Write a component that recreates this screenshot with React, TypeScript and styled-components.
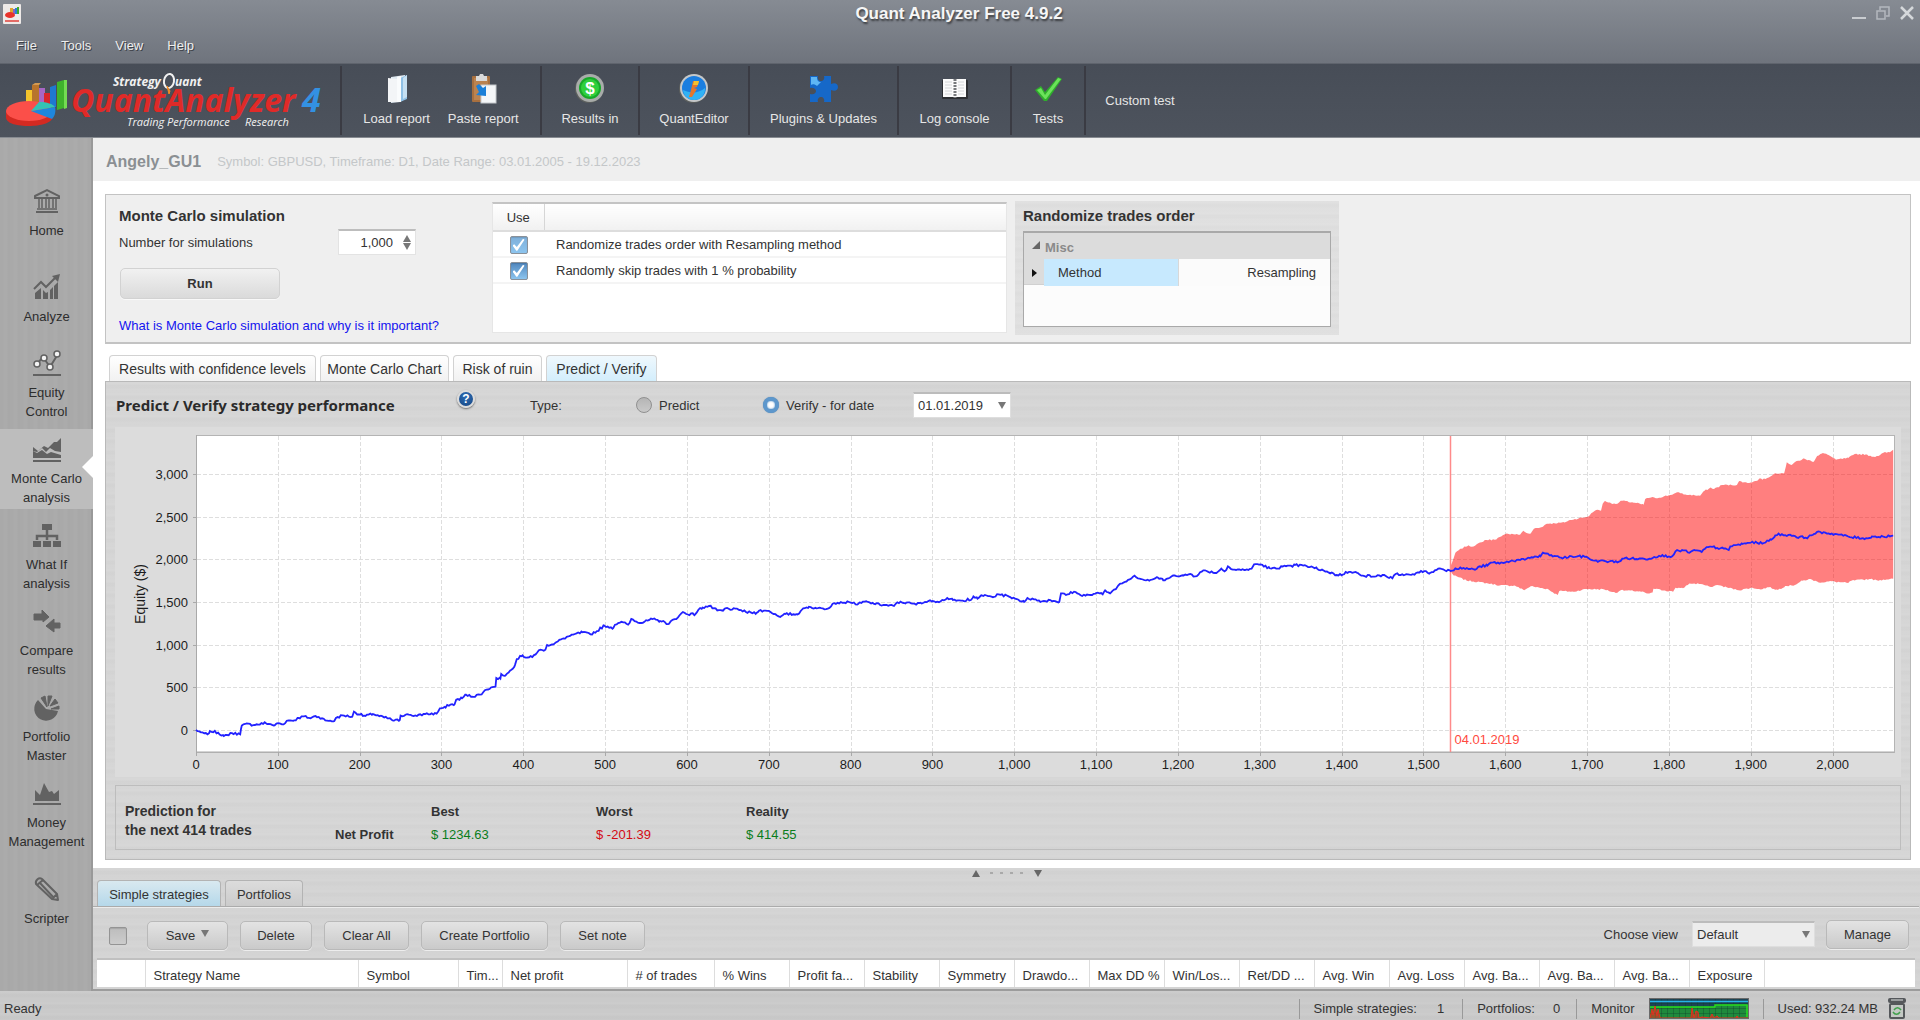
import React, { useLayoutEffect, useRef, useState } from 'react';
import styled, { createGlobalStyle, css } from 'styled-components';

const GlobalStyle = createGlobalStyle`
  *, *::before, *::after { box-sizing: border-box; }
  html, body { margin: 0; padding: 0; }
  body {
    background: #cccccc;
    color: #333333;
    font: 13px/19px "Liberation Sans", Arial, sans-serif;
  }
  button, input, select { font: inherit; color: inherit; margin: 0; }
  h1, h2, h3, p { margin: 0; font-size: 13px; font-weight: bold; }
`;

const brushedH = css`
  background-image: repeating-linear-gradient(
    180deg,
    rgba(255, 255, 255, 0.05) 0 2px,
    rgba(0, 0, 0, 0.006) 3px 6px,
    rgba(255, 255, 255, 0.02) 7px 11px
  );
`;

const Shell = styled.div`
  min-height: 100vh;
  display: flex;
  flex-direction: column;
`;

/* ---------- window frame ---------- */

const Frame = styled.header`
  background: linear-gradient(#868b93, #6f747d);
  border-bottom: 1px solid #5f646d;
  color: #f4f4f4;
`;

const TitleBar = styled.div`
  display: grid;
  grid-template-columns: 1fr auto 1fr;
  align-items: center;
  height: 28px;
  padding: 0 4px 0 2px;
`;

const WindowTitle = styled.h1`
  font-size: 17px;
  line-height: 28px;
  color: #f6f6f6;
  text-shadow: 1px 2px 2px rgba(0, 0, 0, 0.55);
`;

const WindowButtons = styled.div`
  display: flex;
  justify-content: flex-end;
  gap: 6px;
`;

const WindowButton = styled.button`
  width: 18px;
  height: 20px;
  padding: 0;
  border: 0;
  background: none;
  display: grid;
  place-items: center;
`;

const MenuBar = styled.nav`
  display: flex;
  height: 35px;
  padding: 0 4px;
`;

const MenuButton = styled.button`
  border: 0;
  background: none;
  padding: 0 12px;
  color: #eeeeee;
  text-shadow: 1px 1px 0 #3d4148;
`;

/* ---------- toolbar ---------- */

const Toolbar = styled.div`
  display: flex;
  height: 74px;
  padding: 2px 0;
  background: linear-gradient(#474d57, #4d535d);
  border-bottom: 1px solid #878b91;
`;

const LogoCell = styled.div`
  width: 340px;
  flex: none;
`;

const ToolGroup = styled.div<{ $w: number }>`
  display: flex;
  flex: none;
  align-items: stretch;
  justify-content: center;
  gap: 2px;
  width: ${(p) => p.$w}px;
  border-left: 2px solid #3a3b43;
`;

const ToolButton = styled.button`
  display: flex;
  flex-direction: column;
  align-items: center;
  justify-content: center;
  gap: 4px;
  padding: 0 8px;
  border: 0;
  background: none;
  color: #e6e6e6;
  white-space: nowrap;
`;

/* ---------- body ---------- */

const Body = styled.div`
  flex: 1;
  display: flex;
`;

const Sidebar = styled.nav`
  flex: none;
  width: 93px;
  display: flex;
  flex-direction: column;
  gap: 6px;
  padding-top: 33px;
  background: repeating-linear-gradient(90deg, #a9a9a9 0 3px, #ababab 4px 7px, #a8a8a8 8px 10px);
  border-right: 2px solid #999999;
`;

const SideButton = styled.button<{ $active?: boolean }>`
  position: relative;
  flex: none;
  width: 93px;
  height: 80px;
  padding: 7px 2px 0 2px;
  border: 0;
  background: ${(p) => (p.$active ? '#bdbdbd' : 'none')};
  display: flex;
  flex-direction: column;
  align-items: center;
  justify-content: center;
  gap: 7px;
  color: #2d2d2d;
  line-height: 19px;
  svg { flex: none; }
`;

const ActiveNotch = styled.span`
  position: absolute;
  right: 0;
  top: 50%;
  margin-top: -13px;
  border: 11px solid transparent;
  border-left-width: 0;
  border-right-color: #ffffff;
`;

const Main = styled.main`
  flex: 1;
  min-width: 0;
  background: #ffffff;
  display: flex;
  flex-direction: column;
`;

const ReportHeader = styled.div`
  display: flex;
  align-items: center;
  gap: 16px;
  height: 43px;
  padding: 3px 13px 0;
  background: #efefef;
`;

const ReportName = styled.h2`
  font-size: 16px;
  color: #8b8f93;
`;

const ReportInfo = styled.span`
  color: #c4c7c9;
`;

/* ---------- simulation settings ---------- */

const Settings = styled.section`
  display: flex;
  gap: 8px;
  height: 150px;
  margin: 13px 9px 0 12px;
  padding: 6px 12px;
  background: #efefef;
  border: 1px solid #c3c3c3;
  border-bottom-width: 2px;
`;

const SimForm = styled.form`
  width: 366px;
  display: flex;
  flex-direction: column;
  align-items: flex-start;
  padding: 5px 0 0 1px;
`;

const PanelTitle = styled.h3`
  font-size: 15px;
  line-height: 20px;
`;

const FieldRow = styled.div`
  display: flex;
  align-items: center;
  width: 297px;
  margin-top: 3px;
  justify-content: space-between;
`;

const SpinBox = styled.div`
  display: flex;
  align-items: center;
  width: 78px;
  height: 26px;
  padding-right: 4px;
  background: #ffffff;
  border: 1px solid #e3e3e3;
  border-top: 2px solid #bdbdbd;
`;

const SpinInput = styled.input`
  width: 54px;
  flex: 1;
  min-width: 0;
  border: 0;
  padding: 0 10px 0 0;
  background: none;
  text-align: right;
`;

const Arrow = styled.span<{ $up?: boolean; $size?: number; $color?: string }>`
  display: inline-block;
  width: 0;
  height: 0;
  border: ${(p) => p.$size ?? 4}px solid transparent;
  ${(p) =>
    p.$up
      ? css`border-top-width: 0; border-bottom: 7px solid ${p.$color ?? '#777777'};`
      : css`border-bottom-width: 0; border-top: 7px solid ${p.$color ?? '#777777'};`}
`;

const SpinArrows = styled.span`
  display: flex;
  flex-direction: column;
  gap: 1px;
`;

const Button = styled.button<{ $w?: number; $light?: boolean }>`
  height: ${(p) => (p.$light ? 31 : 29)}px;
  ${(p) => p.$w && `width: ${p.$w}px;`}
  padding: 0;
  border: 1px solid ${(p) => (p.$light ? '#d2d2d2' : '#b9b9b9')};
  border-radius: 5px;
  background: ${(p) => (p.$light ? 'linear-gradient(#f1f1f1, #dadada)' : 'linear-gradient(#e3e3e3, #cacaca)')};
  box-shadow: 0 1px 0 rgba(255, 255, 255, 0.6);
  font-weight: ${(p) => (p.$light ? 'bold' : 'normal')};
  white-space: nowrap;
`;

const SaveArrow = styled.span`
  display: inline-block;
  margin-left: 6px;
  vertical-align: 3px;
  line-height: 0;
`;

const RunButton = styled(Button)`
  margin: 13px 0 17px 1px;
`;

const HelpLink = styled.a`
  color: #1414f0;
  text-decoration: none;
  white-space: nowrap;
`;

const MethodsBox = styled.div`
  width: 515px;
  height: 131px;
  margin-top: 1px;
  background: #ffffff;
  border: 1px solid #e6e6e6;
  border-top: 2px solid #c4c4c4;
`;

const MethodsTable = styled.table`
  width: 100%;
  border-collapse: collapse;
  table-layout: fixed;
  th {
    height: 27px;
    padding: 0;
    font-weight: normal;
    background: linear-gradient(#ffffff, #f1f1f1);
    border-bottom: 2px solid #dddddd;
  }
  th:first-child { border-right: 1px solid #d6d6d6; }
  td { height: 26px; padding: 0 0 0 12px; border-bottom: 2px solid #f4f4f4; }
  td:first-child { padding: 0; text-align: center; }
`;

const CheckBox = styled.input.attrs({ type: 'checkbox' })<{ $tone?: string }>`
  appearance: none;
  flex: none;
  display: inline-block;
  vertical-align: middle;
  width: 18px;
  height: 18px;
  border: 1px solid #949494;
  border-radius: 2px;
  background: linear-gradient(#bdbdbd, #cccccc);
  box-shadow: inset 0 1px 1px rgba(0, 0, 0, 0.12);
  &:checked {
    border-color: #8a9199;
    background: linear-gradient(${(p) => p.$tone ?? '#4f86bd'}, #8cc4ee);
  }
  &:checked::after {
    content: '';
    display: block;
    width: 12px;
    height: 12px;
    margin: 2px;
    background: #ffffff;
    clip-path: polygon(0 55%, 14% 45%, 36% 68%, 88% 0, 100% 8%, 40% 100%, 32% 100%);
  }
`;

const MethodPanel = styled.div`
  width: 324px;
  height: 134px;
  padding: 5px 8px;
  background-color: #dfdfdf;
  ${brushedH}
`;

const PropertyBox = styled.div`
  height: 96px;
  margin-top: 5px;
  background: #fcfcfc;
  border: 1px solid #a9a9a9;
  border-top-width: 2px;
`;

const PropertyGroup = styled.div`
  display: flex;
  align-items: center;
  gap: 5px;
  height: 26px;
  padding: 2px 8px 0;
  background: #dcdcdc;
  color: #8a8a8a;
  font-weight: bold;
  svg { margin-bottom: 4px; }
`;

const PropertyRow = styled.div`
  display: grid;
  grid-template-columns: 20px 134px 1fr;
  height: 26px;
  line-height: 27px;
  background: #dcdcdc;
  border-bottom: 1px solid #d0d0d0;
`;

const PropertyName = styled.span`
  padding-left: 14px;
  background: #c7e9fe;
`;

const PropertyValue = styled.span`
  padding-right: 14px;
  text-align: right;
  background: #fbfbfb;
  border-left: 1px solid #d8d8d8;
`;

const RowMarker = styled.span`
  place-self: center;
  border: 4px solid transparent;
  border-left: 5px solid #111111;
  border-right-width: 0;
`;

/* ---------- result tabs ---------- */

const TabRow = styled.div<{ $left: number }>`
  display: flex;
  gap: 4px;
  padding-left: ${(p) => p.$left}px;
`;

const Tab = styled.button<{ $active?: boolean; $dark?: boolean; $w: number }>`
  width: ${(p) => p.$w}px;
  height: 26px;
  padding: 2px 0 0;
  font-size: ${(p) => (p.$dark ? 13 : 14)}px;
  white-space: nowrap;
  border: 1px solid ${(p) => (p.$dark ? '#b3b3b3' : '#d2d2d2')};
  border-bottom: 0;
  border-radius: 4px 4px 0 0;
  background: ${(p) =>
    p.$dark
      ? p.$active ? 'linear-gradient(#d9e9f0, #b5d8ea)' : 'linear-gradient(#dcdcdc, #cbcbcb)'
      : p.$active ? 'linear-gradient(#eff8fd, #d3eefc)' : 'linear-gradient(#ffffff, #f1f1f1)'};
`;

const ResultTabs = styled(TabRow)`
  margin-top: 11px;
`;

const ResultPanel = styled.section`
  margin: 0 9px 8px 12px;
  padding: 0 9px 9px;
  background-color: #d5d5d5;
  ${brushedH}
  border: 1px solid #b9b9b9;
`;

const VerifyBar = styled.div`
  display: grid;
  grid-template-columns: 341px 73px 106px 127px 150px auto;
  align-items: center;
  height: 45px;
  padding: 1px 0 0 1px;
`;

const VerifyTitle = styled.h3`
  font: bold 15px/20px "Noto Sans", "Open Sans", sans-serif;
  color: #2b2b2b;
  white-space: nowrap;
`;

const HelpButton = styled.button`
  width: 18px;
  height: 18px;
  margin-bottom: 12px;
  padding: 0;
  border: 2px solid #dcdcdc;
  border-radius: 50%;
  background: radial-gradient(circle at 50% 30%, #2f6db4, #164683);
  box-shadow: 0 1px 2px rgba(0, 0, 0, 0.5);
  color: #ffffff;
  font-weight: bold;
  font-size: 12px;
  line-height: 14px;
`;

const RadioLabel = styled.label`
  display: flex;
  align-items: center;
  gap: 7px;
  white-space: nowrap;
`;

const Radio = styled.input.attrs({ type: 'radio' })`
  appearance: none;
  width: 16px;
  height: 16px;
  border: 1px solid #909090;
  border-radius: 50%;
  background: linear-gradient(#b5b5b5, #c9c9c9);
  &:checked {
    border: 4px solid #5d97cc;
    background: #ffffff;
    box-shadow: inset 0 0 2px #5d97cc, 0 0 1px #4d7ba6;
  }
`;

const SelectBox = styled.div<{ $w: number; $bg: string }>`
  display: grid;
  align-items: center;
  width: ${(p) => p.$w}px;
  height: 26px;
  background: ${(p) => p.$bg};
  border: 1px solid #dedede;
  border-top: 2px solid #bcbcbc;
  select, span { grid-area: 1 / 1; }
  select {
    width: 100%;
    height: 100%;
    appearance: none;
    border: 0;
    background: none;
    padding: 0 4px;
  }
  span { justify-self: end; margin-right: 4px; pointer-events: none; }
`;

const ChartArea = styled.div`
  height: 350px;
  background: #dcdcdc;
  svg { display: block; font: 13px "Liberation Sans", Arial, sans-serif; }
`;

const Prediction = styled.div`
  display: grid;
  grid-template-columns: 210px 96px 165px 150px 1fr;
  height: 65px;
  margin-top: 8px;
  padding: 16px 9px 0;
  border: 1px solid #bdbdbd;
`;

const PredictionCell = styled.div<{ $color?: string }>`
  display: flex;
  flex-direction: column;
  gap: 4px;
  strong { min-height: 19px; }
  span { color: ${(p) => p.$color ?? 'inherit'}; }
`;

const PredictionTitle = styled.p`
  font-size: 14px;
  line-height: 19px;
`;

/* ---------- databank ---------- */

const Databank = styled.section`
  display: flex;
  flex-direction: column;
  flex: 1;
  background-color: #d3d3d3;
  ${brushedH}
  border-bottom: 2px solid #9c9c9c;
`;

const Splitter = styled.div`
  display: flex;
  justify-content: center;
  align-items: center;
  gap: 10px;
  height: 12px;
  padding-bottom: 2px;
`;

const SplitterGrip = styled.span`
  width: 34px;
  height: 2px;
  background: repeating-linear-gradient(90deg, #a9a9a9 0 3px, transparent 3px 10px);
`;

const DatabankBody = styled.div`
  flex: 1;
  margin-right: 1px;
  padding: 0 4px 2px;
  border-top: 1px solid #ababab;
  box-shadow: inset 0 1px 0 #ececec;
`;

const ActionRow = styled.div`
  display: flex;
  align-items: center;
  gap: 12px;
  height: 51px;
  padding: 6px 6px 0 12px;
  input { margin-right: 8px; }
`;

const ViewPicker = styled.div`
  display: flex;
  align-items: center;
  gap: 14px;
  margin: 0 0 3px auto;
`;

const ViewSelect = styled(SelectBox)`
  margin-right: -3px;
`;

const ColumnTable = styled.table`
  width: 100%;
  border-collapse: collapse;
  table-layout: fixed;
  background: #ffffff;
  border-top: 2px solid #c0c0c0;
  th {
    height: 28px;
    padding: 3px 0 0 8px;
    overflow: hidden;
    white-space: nowrap;
    text-align: left;
    font-weight: normal;
    border-right: 1px solid #dddddd;
  }
  th:last-child { border-right: 0; }
`;

const StatusBar = styled.footer`
  display: flex;
  align-items: center;
  height: 30px;
  padding: 5px 14px 0 4px;
  background-color: #c9c9c9;
  ${brushedH}
`;

const StatusItem = styled.div<{ $gap?: number; $right?: number }>`
  display: flex;
  align-items: center;
  gap: ${(p) => p.$gap ?? 14}px;
  height: 20px;
  padding: 0 ${(p) => p.$right ?? 14}px 0 14px;
  border-left: 1px solid #999999;
  white-space: nowrap;
`;

const Ready = styled.span`
  margin-right: auto;
`;

/* ---------- drawings ---------- */

const BarsAndPie = () => (
  <g>
    <rect x="26" y="24" width="7" height="18" fill="#f3c42c" />
    <path d="M32 19h7v23h-7z" fill="#b8742c" />
    <path d="M32 19l3-2h6l-2 2z" fill="#d39a52" />
    <path d="M39 22h6v20h-6z" fill="#a866c4" />
    <path d="M44 27h6v14h-6z" fill="#d8262c" />
    <path d="M50 21l6-2v22h-6z" fill="#1f78d0" />
    <path d="M57 16l7-2v28l-7 2z" fill="#3fb32c" />
    <path d="M64 14h3v28l-3 1z" fill="#74dc52" />
    <path d="M6 45v6c0 7 12 9 23 9s24-3 24-10v-6z" fill="#d32a22" />
    <ellipse cx="29" cy="45" rx="23" ry="10" fill="#fb4f49" />
    <path d="M31 45l24-4c1 4 0 9-3 12z" fill="#1f86dd" />
    <path d="M31 45l8-9c8 0 14 2 16 5z" fill="#35c2b4" />
  </g>
);

const Logo = () => (
  <svg width="340" height="70" fontFamily="'Open Sans', 'Noto Sans', sans-serif" fontStyle="italic">
    <BarsAndPie />
    <text x="113" y="20" fontSize="12" fontWeight="bold" fill="#f1f1f1">Strategy</text>
    <ellipse cx="169" cy="15" rx="5" ry="7" fill="none" stroke="#f1f1f1" strokeWidth="2" transform="rotate(10 169 15)" />
    <path d="M167 20l3 5-1 3z" fill="#f08a24" stroke="#f08a24" />
    <text x="175" y="20" fontSize="12" fontWeight="bold" fill="#f1f1f1">uant</text>
    <text x="71" y="46" fontSize="32" fontWeight="bold" fill="#e02a28">QuantAnalyzer</text>
    <text x="302" y="46" fontSize="34" fontWeight="bold" fill="#3391e2">4</text>
    <text x="127" y="60" fontSize="11" fill="#f1f1f1">Trading Performance</text>
    <text x="245" y="60" fontSize="11" fill="#f1f1f1">Research</text>
  </svg>
);

const AppIcon = () => (
  <svg width="20" height="22" viewBox="0 0 20 22">
    <rect x="1" y="1" width="18" height="20" rx="1" fill="#eeeae8" />
    <path d="M8 5h3v6H8z" fill="#e2a52c" />
    <path d="M11 6h2v5h-2z" fill="#8b62c0" />
    <path d="M13 5h2v6h-2z" fill="#2a80d2" />
    <path d="M15 4h2v7h-2z" fill="#3ea92d" />
    <ellipse cx="8" cy="12" rx="5" ry="3" fill="#e8332b" />
    <path d="M3 17h14v2H3z" fill="#e36b66" />
  </svg>
);

const LoadIcon = () => (
  <svg width="32" height="32" viewBox="0 0 32 32">
    <path d="M10 4l14-2v24l-5 3-9 1z" fill="#dfe9f1" />
    <path d="M17 6l9-4v24l-7 3z" fill="#8fc1e6" />
    <path d="M22 5l4-3v22l-4 2z" fill="#c6e0f2" />
    <path d="M7 5l9 1 3 23-12 0z" fill="#f3f5f7" />
    <path d="M16 4l4-1v26l-4 0z" fill="#fafcfd" />
  </svg>
);

const PasteIcon = () => (
  <svg width="32" height="32" viewBox="0 0 32 32">
    <rect x="5" y="3" width="18" height="26" rx="1" fill="#a8703f" />
    <rect x="7" y="5" width="14" height="22" fill="#bb8350" />
    <path d="M9 3h3l1-2h3l1 2h3v5H9z" fill="#dadada" />
    <rect x="14" y="12" width="15" height="18" fill="#f4f6f8" stroke="#c4c8cc" />
    <path d="M9 13l3-2 4 4 3-2v10l-10-1 3-3z" fill="#1b7fd8" />
  </svg>
);

const DollarIcon = () => (
  <svg width="32" height="32" viewBox="0 0 32 32">
    <circle cx="15" cy="16" r="14" fill="#5d605e" />
    <circle cx="16" cy="15" r="14" fill="#a9acaa" />
    <circle cx="16" cy="15" r="11" fill="#17a82a" />
    <circle cx="16" cy="15" r="9" fill="#2fcf3d" />
    <text x="16" y="21" textAnchor="middle" fontSize="17" fontWeight="bold" fill="#ffffff" fontFamily="Liberation Sans">$</text>
  </svg>
);

const EditorIcon = () => (
  <svg width="32" height="32" viewBox="0 0 32 32">
    <circle cx="15" cy="16" r="14" fill="#5d605e" />
    <circle cx="16" cy="15" r="14" fill="#c5c8ca" />
    <circle cx="16" cy="15" r="12" fill="#1b7ee0" />
    <path d="M5 17a11 11 0 0 0 22-2c-6 5-14 6-22 2z" fill="#31b2f4" />
    <path d="M15 8h6l-2 6-3 1 3 1-5 8-3 0 2-7z" fill="#e5762a" />
    <path d="M16 8h5l-1 4h-5z" fill="#f4c12e" />
  </svg>
);

const PuzzleIcon = () => (
  <svg width="32" height="32" viewBox="0 0 32 32">
    <path
      d="M3 3h8c-1 3 1 5 3 5s4-2 3-5h7v8c4-2 7 0 7 3s-3 5-7 3v12h-7c1-3-1-5-3-5s-4 2-3 5H3v-8c4 1 6-1 6-3s-3-4-6-3z"
      fill="#1668c8"
    />
    <path d="M4 4h6c0 3 1 5 4 5l-4 4c-2-2-5-2-6-1z" fill="#5fb6f4" />
  </svg>
);

const BookIcon = () => (
  <svg width="32" height="32" viewBox="0 0 32 32">
    <rect x="3" y="7" width="26" height="19" rx="1" fill="#2d2f33" />
    <path d="M4 6h11l1 1 1-1h10v18H17l-1 1-1-1H4z" fill="#fbfbfb" />
    <path d="M16 6v19" stroke="#77797c" strokeWidth="3" strokeDasharray="2 1" />
    <path d="M6 9h7M6 12h7M6 15h7M6 18h7M6 21h7M19 9h6M19 12h6M19 15h6M19 18h6M19 21h6" stroke="#d4d6d8" />
  </svg>
);

const TickIcon = () => (
  <svg width="32" height="32" viewBox="0 0 32 32">
    <path d="M3 17l6-4 4 6L26 4l4 2-15 22h-3z" fill="#2fae2c" />
    <path d="M5 17l4-2 4 7L26 5l3 1-15 20h-1z" fill="#6be25a" />
  </svg>
);

const sideIcons: Record<string, React.ReactNode> = {
  home: (
    <>
      <path d="M2 6L14 0l12 6v2H2z" fill="none" stroke="#626262" strokeWidth="2" />
      <circle cx="14" cy="5" r="1.5" fill="#626262" />
      <path d="M6 9v9M9 9v9M13 9v9M16 9v9M20 9v9M23 9v9M4 19h20" stroke="#626262" strokeWidth="1.5" />
      <path d="M3 22h22" stroke="#626262" strokeWidth="2" />
    </>
  ),
  analyze: (
    <>
      <path d="M2 23v-6l6-5v11zM10 23v-9l3 3 2-1v7zM17 23v-9l3-3v12zM21 23V10l4-4v17z" fill="#626262" />
      <path d="M1 13l7-7 5 5 9-9" fill="none" stroke="#626262" strokeWidth="2" />
      <path d="M19 0l8-2-2 8z" fill="#626262" />
    </>
  ),
  equity: (
    <>
      <path d="M3 13l7-8 7 10 8-13" fill="none" stroke="#626262" strokeWidth="2" />
      {[[4, 12], [11, 6], [17, 15], [24, 2]].map(([x, y]) => (
        <circle key={x} cx={x} cy={y} r="3" fill="#f4f4f4" stroke="#626262" strokeWidth="1.5" />
      ))}
      <path d="M0 23h28" stroke="#626262" strokeWidth="2" />
    </>
  ),
  monte: (
    <>
      <path d="M0 9l5 4 6-5 4 2 6-6 3 0 4-4v14l-6-1-5-3-4 4-4-4-5 4-4-1z" fill="#626262" />
      <path d="M0 13l4 2 5-3 5 4 4-2 10 3v3H0z" fill="#626262" />
      <path d="M0 23h28" stroke="#626262" strokeWidth="2" />
    </>
  ),
  whatif: (
    <>
      <path d="M9 0h10v6H9zM0 17h8v6H0zM10 17h8v6h-8zM20 17h8v6h-8z" fill="#626262" />
      <path d="M14 6v6M4 16v-4h20v4M14 12v4" fill="none" stroke="#626262" strokeWidth="2.5" />
    </>
  ),
  compare: (
    <path
      d="M1 4h8V0l7 7-6 5V10H1zM27 18v-5h-6v-4l-8 7 8 6v-4z"
      fill="#626262" stroke="#626262" strokeLinejoin="round"
    />
  ),
  portfolio: (
    <>
      <path d="M13 13L5 4a12 12 0 1 0 20 11z" fill="#626262" />
      <path d="M14 11L8 2l4-2zM15 10V0h4zM17 10l5-7 3 4zM18 13l8-3v3z" fill="#626262" stroke="#626262" />
    </>
  ),
  money: (
    <>
      <path d="M2 19V8l5 5 4-12 5 9 3-1 2 3 5-4v11z" fill="#626262" />
      <path d="M0 22h28" stroke="#626262" strokeWidth="2" />
    </>
  ),
  scripter: (
    <path
      d="M3 6c-1-4 3-7 6-5l15 15 1 6-6-1zM4 7L10 2M7 5l14 15M20 20l4-4"
      fill="none" stroke="#626262" strokeWidth="2" strokeLinejoin="round"
    />
  ),
};

const Recycle = () => (
  <svg width="18" height="21" viewBox="0 0 18 21">
    <rect x="0" y="0" width="18" height="5" rx="2" fill="#55585b" />
    <path d="M3 2h12" stroke="#e0e2e3" />
    <rect x="2" y="6" width="14" height="14" rx="1" fill="#c3c8c4" stroke="#55585b" strokeWidth="2" />
    <path d="M6 12c2-3 5-3 7 0M12 14c-2 3-5 3-7 0" fill="none" stroke="#3fa04b" strokeWidth="1.5" />
  </svg>
);

const MonitorGraph = () => (
  <svg width="100" height="21" viewBox="0 0 100 21">
    <rect width="100" height="21" fill="#1c4456" />
    <path d="M1 9h65V7h33v13H1z" fill="#1f8a3c" />
    <path
      d="M0 5.5h100M0 10.5h100M0 15.5h100M6.500 0v21M12.500 0v21M18.500 0v21M24.500 0v21M30.500 0v21M36.500 0v21M42.500 0v21M48.500 0v21M54.500 0v21M60.500 0v21M66.500 0v21M72.500 0v21M78.500 0v21M84.500 0v21M90.500 0v21"
      stroke="#123b2c" strokeOpacity="0.35"
    />
    <path d="M1 3.5h98" stroke="#27b4e6" strokeWidth="1.5" />
    <path d="M1 9h65V7h32v12" fill="none" stroke="#27e01c" strokeWidth="1.5" />
    <path
      d="M1 20l2-9 1 6 2-9 2 10 1-7 2 9h31l1-10 2 10 2-7 2 1 1 6 3-1 8 1 2-4 2 4 3-2 2 2h17l1-2 1 2h10"
      fill="#e2301f" fillOpacity="0.6" stroke="#e2301f"
    />
    <rect x="0.5" y="0.5" width="99" height="20" fill="none" stroke="#6a6a6a" />
  </svg>
);

/* ---------- equity chart ---------- */

type Point = [number, number];

const equity: Point[] = [
  [0, 0], [6, -27], [14, -51], [17, -12], [27, -31], [34, -70], [40, -62], [42, -35], [54, -51], [55, 12], [56, 51],
  [60, 70], [72, 59], [85, 82], [96, 55], [99, 78], [107, 66], [111, 109], [120, 113], [125, 140], [132, 160],
  [140, 137], [146, 164], [154, 137], [158, 113], [169, 105], [171, 140], [179, 172], [191, 156], [193, 215],
  [200, 180], [207, 164], [216, 187], [224, 160], [235, 137], [242, 109], [249, 117], [250, 168], [260, 180],
  [270, 164], [280, 187], [294, 191], [298, 254], [305, 262], [307, 293], [316, 301], [318, 355], [325, 371],
  [330, 414], [337, 390], [347, 414], [355, 473], [360, 496], [366, 508], [367, 609], [372, 602], [373, 656],
  [378, 637], [385, 703], [390, 766], [392, 832], [399, 875], [403, 848], [411, 855], [419, 934], [427, 941],
  [429, 996], [438, 1012], [447, 1066], [461, 1117], [472, 1145], [482, 1121], [490, 1160], [499, 1223],
  [510, 1195], [512, 1234], [522, 1262], [528, 1234], [532, 1301], [544, 1254], [558, 1301], [567, 1277],
  [578, 1246], [583, 1293], [589, 1320], [595, 1383], [599, 1359], [610, 1355], [614, 1410], [619, 1434],
  [627, 1453], [637, 1402], [644, 1398], [647, 1426], [664, 1406], [672, 1383], [685, 1371], [688, 1398],
  [700, 1395], [706, 1359], [715, 1332], [720, 1359], [735, 1355], [740, 1406], [749, 1445], [758, 1426],
  [772, 1422], [778, 1480], [788, 1500], [800, 1492], [809, 1476], [817, 1504], [828, 1480], [840, 1465],
  [853, 1453], [857, 1496], [868, 1492], [880, 1469], [885, 1492], [900, 1512], [910, 1508], [918, 1547],
  [925, 1523], [939, 1508], [943, 1539], [947, 1523], [950, 1566], [955, 1539], [960, 1578], [975, 1558],
  [981, 1590], [993, 1566], [1003, 1535], [1012, 1500], [1016, 1547], [1034, 1508], [1044, 1523], [1055, 1500],
  [1057, 1601], [1063, 1582], [1073, 1621], [1081, 1578], [1093, 1582], [1100, 1605], [1108, 1590], [1111, 1637],
  [1118, 1609], [1125, 1664], [1130, 1715], [1137, 1738], [1147, 1809], [1155, 1769], [1166, 1758], [1175, 1789],
  [1182, 1754], [1190, 1785], [1196, 1812], [1207, 1809], [1215, 1828], [1221, 1800], [1231, 1871], [1247, 1840],
  [1253, 1891], [1257, 1859], [1261, 1918], [1267, 1879], [1282, 1875], [1290, 1891], [1293, 1941], [1301, 1941],
  [1312, 1895], [1322, 1891], [1326, 1918], [1340, 1914], [1343, 1934], [1357, 1922], [1370, 1891], [1382, 1859],
  [1394, 1816], [1401, 1820], [1405, 1851], [1420, 1840], [1426, 1809], [1442, 1800], [1450, 1816], [1462, 1777],
  [1466, 1828], [1477, 1816], [1489, 1820], [1497, 1863], [1508, 1840], [1520, 1894], [1533, 1863], [1539, 1894],
  [1549, 1898], [1563, 1879], [1569, 1918], [1578, 1926], [1583, 1961], [1598, 1957], [1602, 1976], [1624, 1996],
  [1628, 2019], [1643, 2035], [1646, 2078], [1654, 2047], [1671, 2016], [1681, 2035], [1699, 2031], [1707, 1988],
  [1723, 1976], [1739, 1973], [1746, 2016], [1760, 2004], [1776, 2008], [1788, 2043], [1804, 2035], [1808, 2094],
  [1817, 2105], [1825, 2078], [1832, 2105], [1840, 2086], [1844, 2125], [1851, 2148], [1863, 2129], [1873, 2109],
  [1875, 2152], [1890, 2180], [1900, 2195], [1916, 2191], [1925, 2230], [1930, 2281], [1934, 2301], [1940, 2281],
  [1948, 2289], [1959, 2258], [1970, 2258], [1977, 2297], [1985, 2320], [1999, 2301], [2009, 2289], [2023, 2258],
  [2043, 2246], [2048, 2269], [2056, 2262], [2074, 2277],
];

const bandTop: Point[] = [
  [1533, 1918], [1537, 2016], [1539, 2078], [1546, 2125], [1555, 2164], [1559, 2148], [1571, 2199], [1575, 2226],
  [1587, 2230], [1595, 2269], [1602, 2301], [1618, 2289], [1622, 2336], [1626, 2308], [1631, 2301], [1635, 2359],
  [1644, 2375], [1651, 2418], [1672, 2430], [1679, 2461], [1701, 2500], [1707, 2551], [1711, 2578], [1717, 2570],
  [1719, 2652], [1722, 2683], [1729, 2656], [1737, 2652], [1741, 2687], [1758, 2664], [1769, 2640], [1771, 2707],
  [1778, 2726], [1784, 2715], [1800, 2750], [1812, 2785], [1820, 2758], [1838, 2746], [1843, 2800], [1851, 2840],
  [1855, 2824], [1865, 2871], [1883, 2871], [1886, 2918], [1896, 2894], [1908, 2922], [1911, 2949], [1914, 2933],
  [1924, 2972], [1930, 3008], [1941, 3015], [1944, 3137], [1950, 3105], [1954, 3140], [1965, 3180], [1977, 3144],
  [1981, 3211], [1988, 3246], [1995, 3222], [2004, 3168], [2019, 3187], [2027, 3234], [2040, 3230], [2050, 3203],
  [2058, 3222], [2062, 3250], [2070, 3254], [2074, 3285],
];

const bandBottom: Point[] = [
  [1533, 1863], [1537, 1812], [1553, 1750], [1569, 1734], [1593, 1695], [1612, 1691], [1623, 1637], [1631, 1684],
  [1652, 1652], [1658, 1613], [1664, 1582], [1666, 1629], [1683, 1621], [1699, 1652], [1721, 1648], [1735, 1605],
  [1741, 1637], [1764, 1625], [1774, 1598], [1780, 1610], [1781, 1656], [1805, 1621], [1808, 1668], [1817, 1660],
  [1825, 1718], [1839, 1711], [1851, 1676], [1859, 1699], [1885, 1637], [1902, 1668], [1912, 1648], [1922, 1672],
  [1933, 1641], [1942, 1687], [1954, 1699], [1963, 1750], [1973, 1769], [1983, 1730], [1999, 1742], [2019, 1722],
  [2023, 1750], [2046, 1769], [2054, 1754], [2074, 1773],
];

const perTrade = (points: Point[], size: number): Point[] => {
  const out: Point[] = [];
  let seed = 7;
  for (let i = 0; i < points.length - 1; i += 1) {
    const [x0, y0] = points[i];
    const [x1, y1] = points[i + 1];
    for (let x = x0; x < x1; x += 2) {
      seed = (seed * 1103515245 + 12345) % 2147483648;
      const move = x === x0 ? 0 : (seed / 2147483648 - 0.5) * size;
      out.push([x, y0 + ((y1 - y0) * (x - x0)) / (x1 - x0) + move]);
    }
  }
  out.push(points[points.length - 1]);
  return out;
};

const equityLine = perTrade(equity, 26);
const bandShape = [...perTrade(bandTop, 16), ...perTrade(bandBottom, 16).reverse()];

const MAX_TRADE = 2075;
const MAX_EQUITY = 3457;
const MIN_EQUITY = -258;
const PLOT = { left: 81, right: 7, top: 8, bottom: 25 };
const CHART_HEIGHT = 350;

const EquityChart = () => {
  const box = useRef<HTMLDivElement>(null);
  const [width, setWidth] = useState(1786);

  useLayoutEffect(() => {
    const node = box.current;
    if (!node) return undefined;
    const measure = () => setWidth(node.clientWidth);
    measure();
    const observer = new ResizeObserver(measure);
    observer.observe(node);
    return () => observer.disconnect();
  }, []);

  const x0 = PLOT.left;
  const x1 = width - PLOT.right;
  const y0 = PLOT.top;
  const y1 = CHART_HEIGHT - PLOT.bottom;
  const sx = (v: number) => x0 + (v / MAX_TRADE) * (x1 - x0);
  const sy = (v: number) => y1 - ((v - MIN_EQUITY) / (MAX_EQUITY - MIN_EQUITY)) * (y1 - y0);
  const crisp = (v: number) => Math.round(v) + 0.5;
  const toPoints = (pts: Point[]) => pts.map(([x, y]) => `${sx(x).toFixed(1)},${sy(y).toFixed(1)}`).join(' ');
  const xTicks = Array.from({ length: 21 }, (_, i) => i * 100);
  const yTicks = Array.from({ length: 7 }, (_, i) => i * 500);

  return (
    <ChartArea ref={box}>
      <svg width={width} height={CHART_HEIGHT} role="img" aria-label="Equity">
        <rect x={x0 + 0.5} y={y0 + 0.5} width={x1 - x0} height={y1 - y0} fill="#ffffff" stroke="#b4b4b4" />
        {xTicks.map((t) => (
          <g key={t}>
            {t > 0 && <path d={`M${crisp(sx(t))} ${y0 + 1}V${y1}`} stroke="#dedede" strokeDasharray="4 2" />}
            <path d={`M${crisp(sx(t))} ${y1}v4`} stroke="#a9a9a9" />
            <text x={sx(t)} y={y1 + 17} textAnchor="middle" fill="#1c1c1c">{t.toLocaleString('en-US')}</text>
          </g>
        ))}
        {yTicks.map((t) => (
          <g key={t}>
            <path d={`M${x0 + 1} ${crisp(sy(t))}H${x1}`} stroke="#dedede" strokeDasharray="4 2" />
            <path d={`M${x0 - 3} ${crisp(sy(t))}h3`} stroke="#a9a9a9" />
            <text x={x0 - 8} y={sy(t) + 5} textAnchor="end" fill="#1c1c1c">{t.toLocaleString('en-US')}</text>
          </g>
        ))}
        <text transform="translate(30 167) rotate(-90)" textAnchor="middle" fontSize="14" fill="#1c1c1c">Equity ($)</text>
        <path d={`M${x0 + 0.5} ${y0}V${y1}H${x1}`} fill="none" stroke="#a9a9a9" />
        <polygon points={toPoints(bandShape)} fill="#ff0000" fillOpacity="0.5" />
        <path d={`M${crisp(sx(1533))} ${y0 + 1}V${y1}`} stroke="#ff8a8a" strokeWidth="1.5" />
        <text x={sx(1533) + 4} y={y1 - 8} fill="#ff4a40">04.01.2019</text>
        <polyline points={toPoints(equityLine)} fill="none" stroke="#2222ff" strokeWidth="1.8" />
      </svg>
    </ChartArea>
  );
};

/* ---------- page ---------- */

const sideItems = [
  { icon: 'home', lines: ['Home'] },
  { icon: 'analyze', lines: ['Analyze'] },
  { icon: 'equity', lines: ['Equity', 'Control'] },
  { icon: 'monte', lines: ['Monte Carlo', 'analysis'], active: true },
  { icon: 'whatif', lines: ['What If', 'analysis'] },
  { icon: 'compare', lines: ['Compare', 'results'] },
  { icon: 'portfolio', lines: ['Portfolio', 'Master'] },
  { icon: 'money', lines: ['Money', 'Management'] },
  { icon: 'scripter', lines: ['Scripter'] },
];

const toolGroups = [
  { width: 200, tools: [{ label: 'Load report', icon: <LoadIcon /> }, { label: 'Paste report', icon: <PasteIcon /> }] },
  { width: 98, tools: [{ label: 'Results in', icon: <DollarIcon /> }] },
  { width: 110, tools: [{ label: 'QuantEditor', icon: <EditorIcon /> }] },
  { width: 149, tools: [{ label: 'Plugins & Updates', icon: <PuzzleIcon /> }] },
  { width: 113, tools: [{ label: 'Log console', icon: <BookIcon /> }] },
  { width: 74, tools: [{ label: 'Tests', icon: <TickIcon /> }] },
  { width: 110, tools: [{ label: 'Custom test', icon: null }] },
];

const columns: [string, number | undefined][] = [
  ['', 48], ['Strategy Name', 213], ['Symbol', 100], ['Tim...', 44], ['Net profit', 125], ['# of trades', 87],
  ['% Wins', 75], ['Profit fa...', 75], ['Stability', 75], ['Symmetry', 75], ['Drawdo...', 75], ['Max DD %', 75],
  ['Win/Los...', 75], ['Ret/DD ...', 75], ['Avg. Win', 75], ['Avg. Loss', 75], ['Avg. Ba...', 75],
  ['Avg. Ba...', 75], ['Avg. Ba...', 75], ['Exposure', 75], ['', undefined],
];

export default function App() {
  return (
    <Shell>
      <GlobalStyle />
      <Frame>
        <TitleBar>
          <AppIcon />
          <WindowTitle>Quant Analyzer Free 4.9.2</WindowTitle>
          <WindowButtons>
            <WindowButton aria-label="Minimize">
              <svg width="16" height="16"><path d="M1 12h14" stroke="#c9ccd0" strokeWidth="2" /></svg>
            </WindowButton>
            <WindowButton aria-label="Restore">
              <svg width="16" height="16">
                <path d="M5 4V1h9v9h-3M2 5h8v8H2z" fill="none" stroke="#b4b8be" strokeWidth="1.5" />
              </svg>
            </WindowButton>
            <WindowButton aria-label="Close">
              <svg width="16" height="16"><path d="M2 1l12 12M14 1L2 13" stroke="#d5d8db" strokeWidth="2.5" /></svg>
            </WindowButton>
          </WindowButtons>
        </TitleBar>
        <MenuBar>
          {['File', 'Tools', 'View', 'Help'].map((m) => <MenuButton key={m}>{m}</MenuButton>)}
        </MenuBar>
      </Frame>

      <Toolbar>
        <LogoCell><Logo /></LogoCell>
        {toolGroups.map((g) => (
          <ToolGroup key={g.tools[0].label} $w={g.width}>
            {g.tools.map((t) => (
              <ToolButton key={t.label}>
                {t.icon}
                {t.label}
              </ToolButton>
            ))}
          </ToolGroup>
        ))}
      </Toolbar>

      <Body>
        <Sidebar>
          {sideItems.map((s) => (
            <SideButton key={s.icon} $active={s.active}>
              <svg width="28" height="24" viewBox="0 0 28 24" overflow="visible">{sideIcons[s.icon]}</svg>
              <span>
                {s.lines[0]}
                {s.lines[1] && <><br />{s.lines[1]}</>}
              </span>
              {s.active && <ActiveNotch />}
            </SideButton>
          ))}
        </Sidebar>

        <Main>
          <ReportHeader>
            <ReportName>Angely_GU1</ReportName>
            <ReportInfo>Symbol: GBPUSD, Timeframe: D1, Date Range: 03.01.2005 - 19.12.2023</ReportInfo>
          </ReportHeader>

          <Settings>
            <SimForm>
              <PanelTitle>Monte Carlo simulation</PanelTitle>
              <FieldRow>
                <label htmlFor="simulations">Number for simulations</label>
                <SpinBox>
                  <SpinInput id="simulations" defaultValue="1,000" />
                  <SpinArrows><Arrow $up /><Arrow /></SpinArrows>
                </SpinBox>
              </FieldRow>
              <RunButton type="button" $light $w={160}>Run</RunButton>
              <HelpLink href="#monte-carlo">What is Monte Carlo simulation and why is it important?</HelpLink>
            </SimForm>

            <MethodsBox>
              <MethodsTable>
                <colgroup><col style={{ width: 51 }} /><col /></colgroup>
                <thead><tr><th>Use</th><th /></tr></thead>
                <tbody>
                  <tr>
                    <td><CheckBox id="resample" defaultChecked $tone="#7fb0da" /></td>
                    <td><label htmlFor="resample">Randomize trades order with Resampling method</label></td>
                  </tr>
                  <tr>
                    <td><CheckBox id="skip" defaultChecked /></td>
                    <td><label htmlFor="skip">Randomly skip trades with 1 % probability</label></td>
                  </tr>
                </tbody>
              </MethodsTable>
            </MethodsBox>

            <MethodPanel>
              <PanelTitle>Randomize trades order</PanelTitle>
              <PropertyBox>
                <PropertyGroup>
                  <svg width="8" height="8"><path d="M8 0v8H0z" fill="#666666" /></svg>
                  Misc
                </PropertyGroup>
                <PropertyRow>
                  <RowMarker />
                  <PropertyName>Method</PropertyName>
                  <PropertyValue>Resampling</PropertyValue>
                </PropertyRow>
              </PropertyBox>
            </MethodPanel>
          </Settings>

          <ResultTabs $left={16}>
            <Tab $w={207}>Results with confidence levels</Tab>
            <Tab $w={129}>Monte Carlo Chart</Tab>
            <Tab $w={89}>Risk of ruin</Tab>
            <Tab $w={111} $active>Predict / Verify</Tab>
          </ResultTabs>
          <ResultPanel>
            <VerifyBar>
              <VerifyTitle>Predict / Verify strategy performance</VerifyTitle>
              <HelpButton aria-label="Help">?</HelpButton>
              <span>Type:</span>
              <RadioLabel><Radio name="type" />Predict</RadioLabel>
              <RadioLabel><Radio name="type" defaultChecked />Verify - for date</RadioLabel>
              <SelectBox $w={98} $bg="#ffffff">
                <select aria-label="Date"><option>01.01.2019</option></select>
                <Arrow />
              </SelectBox>
            </VerifyBar>
            <EquityChart />
            <Prediction>
              <PredictionTitle>Prediction for<br />the next 414 trades</PredictionTitle>
              <PredictionCell><strong /><strong>Net Profit</strong></PredictionCell>
              <PredictionCell $color="#0a7d1c"><strong>Best</strong><span>$ 1234.63</span></PredictionCell>
              <PredictionCell $color="#d40a14"><strong>Worst</strong><span>$ -201.39</span></PredictionCell>
              <PredictionCell $color="#0a7d1c"><strong>Reality</strong><span>$ 414.55</span></PredictionCell>
            </Prediction>
          </ResultPanel>

          <Databank>
            <Splitter>
              <Arrow $up $color="#666666" />
              <SplitterGrip />
              <Arrow $color="#666666" />
            </Splitter>
            <TabRow $left={4}>
              <Tab $dark $active $w={124}>Simple strategies</Tab>
              <Tab $dark $w={78}>Portfolios</Tab>
            </TabRow>
            <DatabankBody>
              <ActionRow>
                <CheckBox aria-label="Select all" />
                <Button $w={81}>Save<SaveArrow><Arrow /></SaveArrow></Button>
                <Button $w={72}>Delete</Button>
                <Button $w={85}>Clear All</Button>
                <Button $w={127}>Create Portfolio</Button>
                <Button $w={85}>Set note</Button>
                <ViewPicker>
                  <label htmlFor="view">Choose view</label>
                  <ViewSelect $w={123} $bg="#ececec">
                    <select id="view"><option>Default</option></select>
                    <Arrow />
                  </ViewSelect>
                  <Button $w={83}>Manage</Button>
                </ViewPicker>
              </ActionRow>
              <ColumnTable>
                <colgroup>
                  {columns.map(([, w], i) => <col key={i} style={w ? { width: w } : undefined} />)}
                </colgroup>
                <thead><tr>{columns.map(([c], i) => <th key={i}>{c}</th>)}</tr></thead>
              </ColumnTable>
            </DatabankBody>
          </Databank>
        </Main>
      </Body>

      <StatusBar>
        <Ready>Ready</Ready>
        <StatusItem $gap={20} $right={18}><span>Simple strategies:</span><span>1</span></StatusItem>
        <StatusItem $gap={18} $right={16}><span>Portfolios:</span><span>0</span></StatusItem>
        <StatusItem>Monitor <MonitorGraph /></StatusItem>
        <StatusItem $gap={10} $right={0}>Used: 932.24 MB <Recycle /></StatusItem>
      </StatusBar>
    </Shell>
  );
}
